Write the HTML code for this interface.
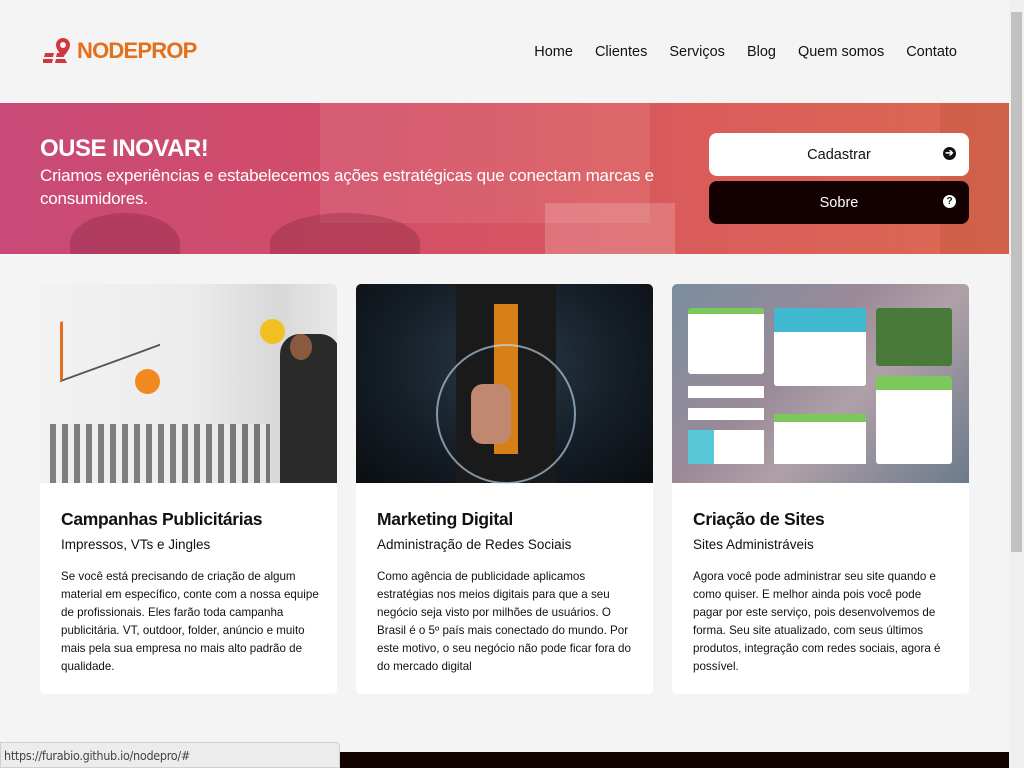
<!DOCTYPE html>
<html><head><meta charset="utf-8"><style>
*{margin:0;padding:0;box-sizing:border-box}
body{width:1024px;height:768px;overflow:hidden;background:#f4f4f4;font-family:"Liberation Sans",sans-serif;color:#111;position:relative}
.hdr{height:103px;position:relative}
.logo{position:absolute;left:43px;top:37px;display:flex;align-items:center}
.logo span{font-weight:bold;color:#e2701d;font-size:22px;letter-spacing:-0.8px;margin-left:4px}
nav{position:absolute;top:44px;right:67px;display:flex;gap:0}
nav a{font-size:14.5px;color:#111;margin-left:22px;text-decoration:none}
.hero{position:absolute;top:103px;left:0;width:1009px;height:151px;overflow:hidden;
background:linear-gradient(90deg,#c94a78 0%,#d24d68 35%,#d95a5c 65%,#dc6a52 100%)}
.hero .b{position:absolute;background:rgba(80,10,30,.22)}
.hero .l{position:absolute;background:rgba(255,230,220,.1)}
.hero h1{position:absolute;left:40px;top:32px;color:#fff;font-size:24px;letter-spacing:-0.5px}
.hero p{position:absolute;left:40px;top:61px;color:#fff;font-size:17px;line-height:23px;width:660px;letter-spacing:-0.2px}
.btn{position:absolute;left:709px;width:260px;height:43px;border-radius:8px;font-size:14.5px;text-align:center;line-height:45px}
.btn i{position:absolute;right:13px;top:14px;width:13px;height:13px;border-radius:50%;font-style:normal;font-size:10px;line-height:13px;font-weight:bold}
.card{position:absolute;top:284px;width:297px;height:410px;background:#fff;border-radius:5px;overflow:hidden}
.card .img{height:199px}
.card h2{font-size:17.5px;margin:26px 0 0 21px;letter-spacing:-0.3px}
.card h3{font-size:13.5px;font-weight:normal;margin:7px 0 0 21px}
.card p{font-size:11.6px;line-height:18px;margin:16px 18px 0 21px}
.sb{position:absolute;right:0;top:0;width:15px;height:768px;background:#f0f0f0}
.sb div{position:absolute;left:2px;top:12px;width:11px;height:540px;background:#c1c1c1}
.status{position:absolute;left:0;top:742px;width:340px;height:26px;background:#ececec;border:1px solid #d0d0d0;border-radius:0 4px 0 0;font-family:"DejaVu Sans Condensed","DejaVu Sans",sans-serif;font-size:12.5px;color:#444;padding:5px 0 0 3px;letter-spacing:-0.3px}
.foot{position:absolute;left:339px;top:752px;width:670px;height:16px;background:#120200}
</style></head><body>
<div class="hdr">
<div class="logo"><svg width="30" height="28" viewBox="0 0 30 28"><path d="M2 16h9l-1 4H1zM0 22h10l-1 4H0zM13 20l1-4h6l1 4zM12 26l1-4h9l2 4z" fill="#d2373f"/><path d="M20 1a7 7 0 0 0-7 7c0 5 7 12 7 12s7-7 7-12a7 7 0 0 0-7-7z" fill="#d2373f"/><circle cx="20" cy="8" r="3" fill="#f4f4f4"/></svg><span>NODEPROP</span></div>
<nav><a>Home</a><a>Clientes</a><a>Serviços</a><a>Blog</a><a>Quem somos</a><a>Contato</a></nav>
</div>
<div class="hero">
<div class="l" style="left:320px;top:0;width:330px;height:120px"></div>
<div class="b" style="left:70px;top:110px;width:110px;height:60px;border-radius:50% 50% 0 0"></div>
<div class="b" style="left:270px;top:110px;width:150px;height:60px;border-radius:50% 50% 0 0"></div>
<div class="l" style="left:545px;top:100px;width:130px;height:55px;background:rgba(255,240,240,.2)"></div>
<div class="b" style="left:940px;top:0;width:69px;height:151px;background:rgba(120,40,20,.12)"></div>
<h1>OUSE INOVAR!</h1>
<p>Criamos experiências e estabelecemos ações estratégicas que conectam marcas e consumidores.</p>
</div>
<div class="btn" style="top:133px;background:#fff;color:#111">Cadastrar<i style="background:#111;color:#fff">➔</i></div>
<div class="btn" style="top:181px;background:#130000;color:#fff">Sobre<i style="background:#fff;color:#111">?</i></div>

<div class="card" style="left:40px"><div class="img" style="background:linear-gradient(90deg,#f2f2f2 0%,#ececec 50%,#d8d8d8 80%,#e8e8e8 100%);position:relative">
<div style="position:absolute;left:240px;top:50px;width:60px;height:149px;background:#2a2a2a;border-radius:20px 20px 0 0"></div>
<div style="position:absolute;left:250px;top:50px;width:22px;height:26px;background:#8a5a40;border-radius:50%"></div>
<div style="position:absolute;left:10px;top:140px;width:220px;height:59px;background:repeating-linear-gradient(90deg,#333 0 6px,#eee 6px 12px);opacity:.6"></div>
<div style="position:absolute;left:20px;top:20px;width:100px;height:60px;border-left:3px solid #e07020;border-bottom:2px solid #555;transform:skewY(-20deg)"></div>
<div style="position:absolute;left:95px;top:85px;width:25px;height:25px;border-radius:50%;background:#f08a20"></div>
<div style="position:absolute;left:220px;top:35px;width:25px;height:25px;border-radius:50%;background:#f2c020"></div>
</div>
<h2>Campanhas Publicitárias</h2><h3>Impressos, VTs e Jingles</h3>
<p>Se você está precisando de criação de algum material em específico, conte com a nossa equipe de profissionais. Eles farão toda campanha publicitária. VT, outdoor, folder, anúncio e muito mais pela sua empresa no mais alto padrão de qualidade.</p></div>

<div class="card" style="left:356px"><div class="img" style="background:radial-gradient(ellipse at 50% 40%,#2a3a48 0%,#141c24 60%,#0a0e12 100%);position:relative">
<div style="position:absolute;left:100px;top:0;width:100px;height:199px;background:#1a1a1a"></div>
<div style="position:absolute;left:138px;top:20px;width:24px;height:150px;background:#d88018"></div>
<div style="position:absolute;left:80px;top:60px;width:140px;height:140px;border:2px solid rgba(200,230,255,.6);border-radius:50%"></div>
<div style="position:absolute;left:115px;top:100px;width:40px;height:60px;background:#c08870;border-radius:12px"></div>
</div>
<h2>Marketing Digital</h2><h3>Administração de Redes Sociais</h3>
<p>Como agência de publicidade aplicamos estratégias nos meios digitais para que a seu negócio seja visto por milhões de usuários. O Brasil é o 5º país mais conectado do mundo. Por este motivo, o seu negócio não pode ficar fora do do mercado digital</p></div>

<div class="card" style="left:672px"><div class="img" style="background:linear-gradient(135deg,#7a8ea0 0%,#9a8a98 40%,#b0a0a8 60%,#6a7a8a 100%);position:relative">
<div style="position:absolute;left:16px;top:24px;width:76px;height:66px;background:#fff;border-radius:3px;border-top:6px solid #7cc85a"></div>
<div style="position:absolute;left:102px;top:24px;width:92px;height:78px;background:#fff;border-radius:3px;border-top:24px solid #40b8d0"></div>
<div style="position:absolute;left:204px;top:24px;width:76px;height:58px;background:#4a7a3a;border-radius:3px"></div>
<div style="position:absolute;left:204px;top:92px;width:76px;height:88px;background:#fff;border-radius:3px;border-top:14px solid #7cc85a"></div>
<div style="position:absolute;left:16px;top:102px;width:76px;height:12px;background:#fff"></div>
<div style="position:absolute;left:16px;top:124px;width:76px;height:12px;background:#fff"></div>
<div style="position:absolute;left:16px;top:146px;width:76px;height:34px;background:#fff;border-left:26px solid #58c8d8"></div>
<div style="position:absolute;left:102px;top:130px;width:92px;height:50px;background:#fff;border-top:8px solid #7cc85a"></div>
</div>
<h2>Criação de Sites</h2><h3>Sites Administráveis</h3>
<p>Agora você pode administrar seu site quando e como quiser. E melhor ainda pois você pode pagar por este serviço, pois desenvolvemos de forma. Seu site atualizado, com seus últimos produtos, integração com redes sociais, agora é possível.</p></div>

<div class="foot"></div>
<div class="status">https://furabio.github.io/nodepro/#</div>
<div class="sb"><div></div></div>
</body></html>
